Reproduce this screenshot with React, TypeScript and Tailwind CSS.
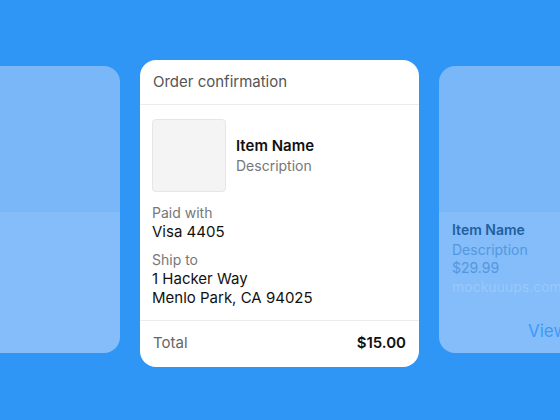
import React from "react";

export default function App() {
  return (
    <div
      className="w-[560px] h-[420px] overflow-hidden bg-[#2f96f6] flex justify-start items-start gap-[20px] pt-[60px]"
      style={{ fontFamily: "Inter, 'Noto Sans', sans-serif" }}
    >
      {/* left card */}
      <div className="shrink-0 ml-[-159px] w-[279px] h-[287px] mt-[6px] rounded-[16px] overflow-hidden flex flex-col">
        <div className="h-[146px] bg-[#79b7f9]" />
        <div className="flex-1 bg-[#84bdf9]" />
      </div>

      {/* center card */}
      <div className="shrink-0 w-[279px] h-[307px] rounded-[16px] bg-white flex flex-col">
        <div className="h-[45px] border-b border-[#ececec] flex items-center px-[13px] pt-[1px] text-[15px] text-[#555555]">
          Order confirmation
        </div>
        <div className="flex-1 px-[12px] pt-[14px]">
          <div className="flex items-center gap-[10px]">
            <div className="w-[74px] h-[73px] rounded-[4px] bg-[#f4f4f4] border border-[#e6e6e6]" />
            <div className="flex flex-col pt-[1px]">
              <div className="text-[15px] font-semibold text-[#111] leading-[20px]">Item Name</div>
              <div className="text-[14px] text-[#777] leading-[20px]">Description</div>
            </div>
          </div>
          <div className="mt-[12px] text-[14px] text-[#777] leading-[18px]">Paid with</div>
          <div className="text-[15px] text-[#111] leading-[19px]">Visa 4405</div>
          <div className="mt-[10px] text-[14px] text-[#777] leading-[18px]">Ship to</div>
          <div className="text-[15px] text-[#111] leading-[19px]">1 Hacker Way</div>
          <div className="text-[15px] text-[#111] leading-[19px]">Menlo Park, CA 94025</div>
        </div>
        <div className="h-[47px] border-t border-[#ececec] flex items-center justify-between px-[13px] pb-[2px]">
          <span className="text-[15px] text-[#666]">Total</span>
          <span className="text-[15px] font-semibold text-[#111]">$15.00</span>
        </div>
      </div>

      {/* right card */}
      <div className="shrink-0 w-[279px] h-[287px] mt-[6px] rounded-[16px] overflow-hidden flex flex-col">
        <div className="h-[146px] bg-[#79b7f9]" />
        <div className="flex-1 bg-[#84bdf9] px-[13px] pt-[8px] relative">
          <div className="text-[14px] font-semibold text-[#225f9f] leading-[20px]">Item Name</div>
          <div className="text-[14px] text-[#5597df] leading-[19px]">Description</div>
          <div className="text-[14px] text-[#5597df] leading-[18px]">$29.99</div>
          <div className="text-[14px] text-[#98c9fa] leading-[20px]">mockuuups.com</div>
          <div className="absolute left-[89px] top-[107px] text-[17px] text-[#3d9af5]">View</div>
        </div>
      </div>
    </div>
  );
}
